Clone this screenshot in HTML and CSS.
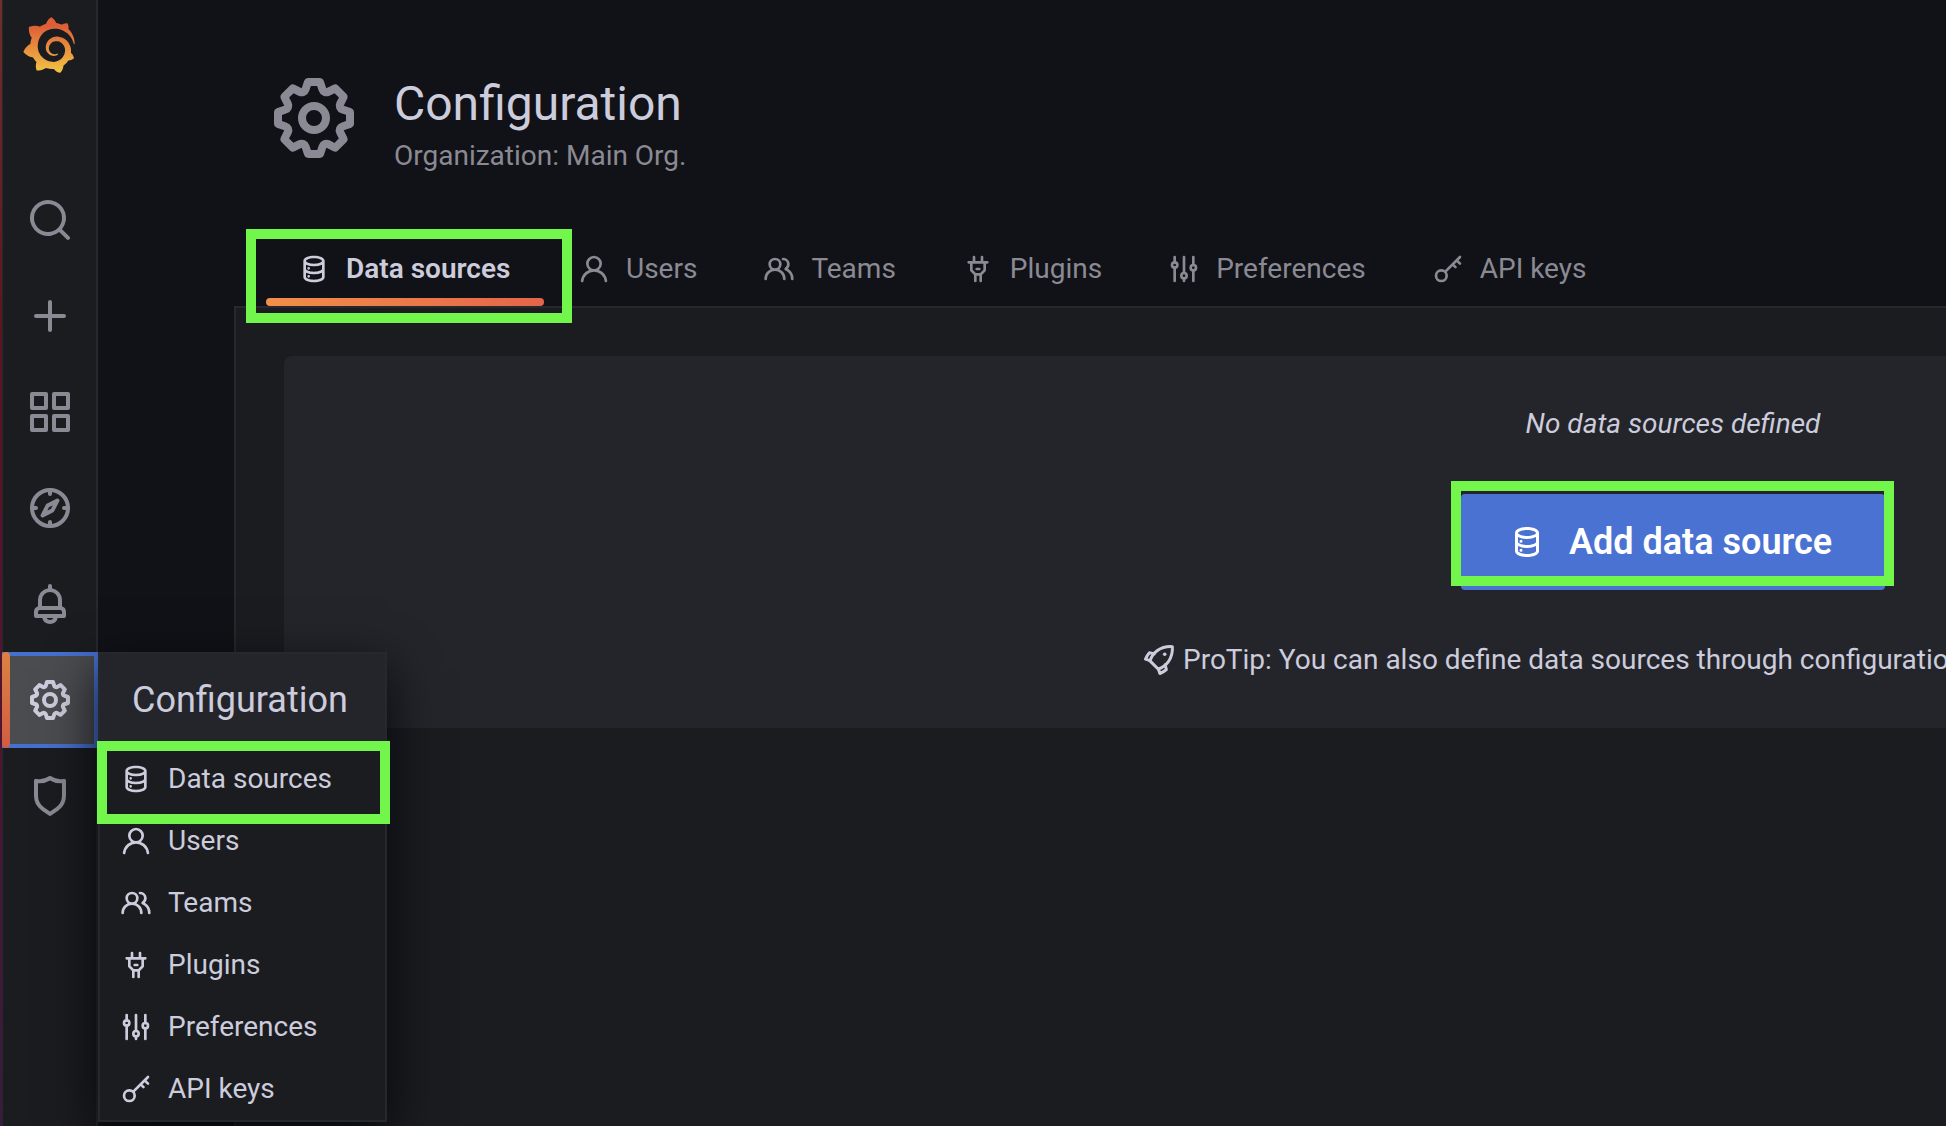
FILE: index.html
```html
<!DOCTYPE html>
<html lang="en">
<head>
<meta charset="utf-8">
<meta name="viewport" content="width=device-width, initial-scale=1">
<title>Configuration: Data sources - Grafana</title>
<link rel="stylesheet" href="styles.css">
</head>
<body>
<svg class="sprite" aria-hidden="true">
  <symbol id="i-search" viewBox="0 0 24 24"><path d="M21.71,20.29,18,16.61A9,9,0,1,0,16.61,18l3.68,3.68a1,1,0,0,0,1.42,0A1,1,0,0,0,21.71,20.29ZM11,18a7,7,0,1,1,7-7A7,7,0,0,1,11,18Z"/></symbol>
  <symbol id="i-plus" viewBox="0 0 24 24"><path d="M19,11H13V5a1,1,0,0,0-2,0v6H5a1,1,0,0,0,0,2h6v6a1,1,0,0,0,2,0V13h6a1,1,0,0,0,0-2Z"/></symbol>
  <symbol id="i-apps" viewBox="0 0 24 24"><path d="M10,13H3a1,1,0,0,0-1,1v7a1,1,0,0,0,1,1h7a1,1,0,0,0,1-1V14A1,1,0,0,0,10,13ZM9,20H4V15H9ZM21,2H14a1,1,0,0,0-1,1v7a1,1,0,0,0,1,1h7a1,1,0,0,0,1-1V3A1,1,0,0,0,21,2ZM20,9H15V4h5Zm1,4H14a1,1,0,0,0-1,1v7a1,1,0,0,0,1,1h7a1,1,0,0,0,1-1V14A1,1,0,0,0,21,13Zm-1,7H15V15h5ZM10,2H3A1,1,0,0,0,2,3v7a1,1,0,0,0,1,1h7a1,1,0,0,0,1-1V3A1,1,0,0,0,10,2ZM9,9H4V4H9Z"/></symbol>
  <symbol id="i-compass" viewBox="0 0 24 24"><g fill="none" stroke="currentColor" stroke-width="2" stroke-linecap="round" stroke-linejoin="round"><circle cx="12" cy="12" r="9"/><path d="M12 3v2M12 19v2M3 12h2M19 12h2"/><path d="M15.7 8.3 10.8 10.8 8.3 15.7 13.2 13.2Z"/></g></symbol>
  <symbol id="i-bell" viewBox="0 0 24 24"><path d="M18,13.18V10a6,6,0,0,0-5-5.91V3a1,1,0,0,0-2,0V4.09A6,6,0,0,0,6,10v3.18A3,3,0,0,0,4,16v2a1,1,0,0,0,1,1H8.14a4,4,0,0,0,7.72,0H19a1,1,0,0,0,1-1V16A3,3,0,0,0,18,13.18ZM8,10a4,4,0,0,1,8,0v3H8Zm4,10a2,2,0,0,1-1.72-1h3.44A2,2,0,0,1,12,20Zm6-3H6V16a1,1,0,0,1,1-1H17a1,1,0,0,1,1,1Z"/></symbol>
  <symbol id="i-cog" viewBox="0 0 24 24"><path d="M21.32,9.55l-1.89-.63.89-1.78A1,1,0,0,0,20.13,6L18,3.87a1,1,0,0,0-1.15-.19l-1.78.89-.63-1.89A1,1,0,0,0,13.5,2h-3a1,1,0,0,0-.95.68L8.92,4.57,7.14,3.68A1,1,0,0,0,6,3.87L3.87,6a1,1,0,0,0-.19,1.15l.89,1.78-1.89.63A1,1,0,0,0,2,10.5v3a1,1,0,0,0,.68.95l1.89.63-.89,1.78A1,1,0,0,0,3.87,18L6,20.13a1,1,0,0,0,1.15.19l1.78-.89.63,1.89a1,1,0,0,0,.95.68h3a1,1,0,0,0,.95-.68l.63-1.89,1.78.89A1,1,0,0,0,18,20.13L20.13,18a1,1,0,0,0,.19-1.15l-.89-1.78,1.89-.63A1,1,0,0,0,22,13.5v-3A1,1,0,0,0,21.32,9.55ZM20,12.78l-1.2.4A2,2,0,0,0,17.64,16l.57,1.14-1.1,1.1L16,17.64a2,2,0,0,0-2.79,1.16l-.4,1.2H11.22l-.4-1.2A2,2,0,0,0,8,17.64l-1.14.57-1.1-1.1L6.36,16A2,2,0,0,0,5.2,13.18L4,12.78V11.22l1.2-.4A2,2,0,0,0,6.36,8L5.79,6.89l1.1-1.1L8,6.36A2,2,0,0,0,10.82,5.2l.4-1.2h1.56l.4,1.2A2,2,0,0,0,16,6.36l1.14-.57,1.1,1.1L17.64,8a2,2,0,0,0,1.16,2.79l1.2.4ZM12,8a4,4,0,1,0,4,4A4,4,0,0,0,12,8Zm0,6a2,2,0,1,1,2-2A2,2,0,0,1,12,14Z"/></symbol>
  <symbol id="i-shield" viewBox="0 0 24 24"><path d="M19.63,3.65a1,1,0,0,0-.84-.2,8,8,0,0,1-6.22-1.27,1,1,0,0,0-1.14,0A8,8,0,0,1,5.21,3.45a1,1,0,0,0-.84.2A1,1,0,0,0,4,4.43v7.45a9,9,0,0,0,3.77,7.33l3.65,2.6a1,1,0,0,0,1.16,0l3.65-2.6A9,9,0,0,0,20,11.88V4.43A1,1,0,0,0,19.63,3.65ZM18,11.88a7,7,0,0,1-2.93,5.7L12,19.77,8.93,17.58A7,7,0,0,1,6,11.88V5.58a10,10,0,0,0,6-1.39,10,10,0,0,0,6,1.39Z"/></symbol>
  <symbol id="i-database" viewBox="0 0 24 24"><path d="M8,16.5a1,1,0,1,0,1,1A1,1,0,0,0,8,16.5ZM12,2C8,2,4,3.37,4,6V18c0,2.63,4,4,8,4s8-1.37,8-4V6C20,3.37,16,2,12,2Zm6,16c0,.71-2.28,2-6,2s-6-1.29-6-2V14.73A13.16,13.16,0,0,0,12,16a13.16,13.16,0,0,0,6-1.27Zm0-6c0,.71-2.28,2-6,2s-6-1.29-6-2V8.73A13.16,13.16,0,0,0,12,10a13.16,13.16,0,0,0,6-1.27ZM12,8C8.28,8,6,6.71,6,6s2.28-2,6-2,6,1.29,6,2S15.72,8,12,8ZM8,10.5a1,1,0,1,0,1,1A1,1,0,0,0,8,10.5Z"/></symbol>
  <symbol id="i-user" viewBox="0 0 24 24"><path d="M15.71,12.71a6,6,0,1,0-7.42,0,10,10,0,0,0-6.22,8.18,1,1,0,0,0,2,.22,8,8,0,0,1,15.9,0,1,1,0,0,0,1,.89h.11a1,1,0,0,0,.88-1.1A10,10,0,0,0,15.71,12.71ZM12,12a4,4,0,1,1,4-4A4,4,0,0,1,12,12Z"/></symbol>
  <symbol id="i-users" viewBox="0 0 24 24"><path d="M12.3,12.22A4.92,4.92,0,0,0,14,8.5a5,5,0,0,0-10,0,4.92,4.92,0,0,0,1.7,3.72A8,8,0,0,0,1,19.5a1,1,0,0,0,2,0,6,6,0,0,1,12,0,1,1,0,0,0,2,0A8,8,0,0,0,12.3,12.22ZM9,11.5a3,3,0,1,1,3-3A3,3,0,0,1,9,11.5Zm9.74.32A5,5,0,0,0,15,3.5a1,1,0,0,0,0,2,3,3,0,0,1,3,3,3,3,0,0,1-1.5,2.59,1,1,0,0,0-.5.84,1,1,0,0,0,.45.86l.39.26.13.07a7,7,0,0,1,4,6.38,1,1,0,0,0,2,0A9,9,0,0,0,18.74,11.82Z"/></symbol>
  <symbol id="i-plug" viewBox="0 0 24 24"><path d="M19,6H16V3a1,1,0,0,0-2,0V6H10V3A1,1,0,0,0,8,3V6H5A1,1,0,0,0,5,8H6v5a1,1,0,0,0,.29.71L9,16.41V21a1,1,0,0,0,2,0V17h2v4a1,1,0,0,0,2,0V16.41l2.71-2.7A1,1,0,0,0,18,13V8h1a1,1,0,0,0,0-2Zm-3,6.59L13.59,15H10.41L8,12.59V8h8ZM11,13h2a1,1,0,0,0,0-2H11a1,1,0,0,0,0,2Z"/></symbol>
  <symbol id="i-sliders" viewBox="0 0 24 24"><g fill="none" stroke="currentColor" stroke-width="2" stroke-linecap="round"><path d="M5 3v4M5 11v10M12 3v12M12 19v2M19 3v6M19 13v8"/><circle cx="5" cy="9" r="2"/><circle cx="12" cy="17" r="2"/><circle cx="19" cy="11" r="2"/></g></symbol>
  <symbol id="i-key" viewBox="0 0 24 24"><g fill="none" stroke="currentColor" stroke-width="2" stroke-linecap="round"><circle cx="7" cy="17" r="4"/><path d="M10 14 21 3M18.5 5.5 21 8M15.5 8.5 17.6 10.6"/></g></symbol>
  <symbol id="i-rocket" viewBox="0 0 24 24"><g fill="none" stroke="currentColor" stroke-width="2" stroke-linecap="round" stroke-linejoin="round"><path d="M6 12.6C7.6 7.4 12.6 2.6 20.9 3.1 21.4 11.4 16.6 16.4 11.4 18Z"/><path d="M8.8 7.9 5.6 7.1Q4.2 8.6 3 11.4L6 12.4M16.1 15.2 16.9 18.4Q15.4 19.8 12.6 21L11.6 18"/></g><circle cx="15.8" cy="8.2" r="1.2"/></symbol>
</svg>

<div class="app">
  <nav class="sidebar" aria-label="Main">
    <a class="logo" href="#" aria-label="Home">
      <svg viewBox="0 0 351 365" aria-hidden="true">
        <defs><linearGradient id="flame" gradientUnits="userSpaceOnUse" x1="175" y1="60" x2="175" y2="360"><stop offset="0" stop-color="#dd5f38"/><stop offset="1" stop-color="#f2c344"/></linearGradient></defs>
        <path fill="url(#flame)" d="M342,161.2c-0.6-6.1-1.6-13.1-3.6-20.9c-2-7.7-5-16.2-9.4-25c-4.4-8.8-10.1-17.9-17.5-26.8c-2.9-3.5-6.1-6.9-9.5-10.2c5.1-20.3-6.2-37.9-6.2-37.9c-19.5-1.2-31.9,6.1-36.5,9.4c-0.8-0.3-1.5-0.7-2.3-1c-3.3-1.3-6.7-2.6-10.3-3.7c-3.5-1.1-7.1-2.1-10.8-3c-3.7-0.9-7.4-1.6-11.2-2.2c-0.7-0.1-1.3-0.2-2-0.3c-8.5-27.2-32.9-38.6-32.9-38.6c-27.3,17.3-32.4,41.5-32.4,41.5s-0.1,0.5-0.3,1.4c-1.5,0.4-3,0.9-4.5,1.3c-2.1,0.6-4.2,1.4-6.2,2.2c-2.1,0.8-4.1,1.6-6.2,2.5c-4.1,1.8-8.2,3.8-12.2,6c-3.9,2.2-7.7,4.6-11.4,7.1c-0.5-0.2-1-0.4-1-0.4c-37.8-14.4-71.3,2.9-71.3,2.9c-3.1,40.2,15.1,65.5,18.7,70.1c-0.9,2.5-1.7,5-2.5,7.5c-2.8,9.1-4.9,18.4-6.2,28.1c-0.2,1.4-0.4,2.8-0.5,4.2C18.8,192.7,8.5,228,8.5,228c29.1,33.5,63.1,35.6,63.1,35.6c0,0,0.1-0.1,0.1-0.1c4.3,7.7,9.3,15,14.9,21.9c2.4,2.9,4.8,5.6,7.4,8.3c-10.6,30.4,1.5,55.6,1.5,55.6c32.4,1.2,53.7-14.2,58.2-17.7c3.2,1.1,6.5,2.1,9.8,2.9c10,2.6,20.2,4.1,30.4,4.5c2.5,0.1,5.1,0.2,7.6,0.1l1.2,0l0.8,0l1.6,0l1.6-0.1l0,0.1c15.3,21.8,42.1,24.9,42.1,24.9c19.1-20.1,20.2-40.1,20.2-44.4l0,0c0,0,0-0.1,0-0.3c0-0.4,0-0.6,0-0.6l0,0c0-0.3,0-0.6,0-0.9c4-2.8,7.8-5.8,11.4-9.1c7.6-6.9,14.3-14.8,19.9-23.3c0.5-0.8,1-1.6,1.5-2.4c21.6,1.2,36.9-13.4,36.9-13.4c-3.6-22.5-16.4-33.5-19.1-35.6l0,0c0,0-0.1-0.1-0.3-0.2c-0.2-0.1-0.2-0.2-0.2-0.2c0,0,0,0,0,0c-0.1-0.1-0.3-0.2-0.5-0.3c0.1-1.4,0.2-2.7,0.3-4.1c0.2-2.4,0.2-4.9,0.2-7.3l0-1.8l0-0.9l0-0.5c0-0.6,0-0.4,0-0.6l-0.1-1.5l-0.1-2c0-0.7-0.1-1.3-0.2-1.9c-0.1-0.6-0.1-1.3-0.2-1.9l-0.2-1.9l-0.3-1.9c-0.4-2.5-0.8-4.9-1.4-7.4c-2.3-9.7-6.1-18.9-11-27.2c-5-8.3-11.2-15.6-18.3-21.8c-7-6.2-14.9-11.2-23.1-14.9c-8.3-3.7-16.9-6.1-25.5-7.2c-4.3-0.6-8.6-0.8-12.9-0.7l-1.6,0l-0.4,0c-0.1,0-0.6,0-0.5,0l-0.7,0l-1.6,0.1c-0.6,0-1.2,0.1-1.7,0.1c-2.2,0.2-4.4,0.5-6.5,0.9c-8.6,1.6-16.7,4.7-23.8,9c-7.1,4.3-13.3,9.6-18.3,15.6c-5,6-8.9,12.7-11.6,19.6c-2.7,6.9-4.2,14.1-4.6,21c-0.1,1.7-0.1,3.5-0.1,5.2c0,0.4,0,0.9,0,1.3l0.1,1.4c0.1,0.8,0.1,1.7,0.2,2.5c0.3,3.5,1,6.9,1.9,10.1c1.9,6.5,4.9,12.4,8.6,17.4c3.7,5,8.2,9.1,12.9,12.4c4.7,3.2,9.8,5.5,14.8,7c5,1.5,10,2.1,14.7,2.1c0.6,0,1.2,0,1.7,0c0.3,0,0.6,0,0.9,0c0.3,0,0.6,0,0.9-0.1c0.5,0,1-0.1,1.5-0.1c0.1,0,0.3,0,0.4-0.1l0.5-0.1c0.3,0,0.6-0.1,0.9-0.1c0.6-0.1,1.1-0.2,1.7-0.3c0.6-0.1,1.1-0.2,1.6-0.4c1.1-0.2,2.1-0.6,3.1-0.9c2-0.7,4-1.5,5.7-2.4c1.8-0.9,3.4-2,5-3c0.4-0.3,0.9-0.6,1.3-1c1.6-1.3,1.9-3.7,0.6-5.3c-1.1-1.4-3.1-1.8-4.7-0.9c-0.4,0.2-0.8,0.4-1.2,0.6c-1.4,0.7-2.8,1.3-4.3,1.8c-1.5,0.5-3.1,0.9-4.7,1.2c-0.8,0.1-1.6,0.2-2.5,0.3c-0.4,0-0.8,0.1-1.3,0.1c-0.4,0-0.9,0-1.2,0c-0.4,0-0.8,0-1.2,0c-0.5,0-1,0-1.5-0.1c0,0-0.3,0-0.1,0l-0.2,0l-0.3,0c-0.2,0-0.5,0-0.7-0.1c-0.5-0.1-0.9-0.1-1.4-0.2c-3.7-0.5-7.4-1.6-10.9-3.2c-3.6-1.6-7-3.8-10.1-6.6c-3.1-2.8-5.8-6.1-7.9-9.9c-2.1-3.8-3.6-8-4.3-12.4c-0.3-2.2-0.5-4.5-0.4-6.7c0-0.6,0.1-1.2,0.1-1.8c0,0.2,0-0.1,0-0.1l0-0.2l0-0.5c0-0.3,0.1-0.6,0.1-0.9c0.1-1.2,0.3-2.4,0.5-3.6c1.7-9.6,6.5-19,13.9-26.1c1.9-1.8,3.9-3.4,6-4.9c2.1-1.5,4.4-2.8,6.8-3.9c2.4-1.1,4.8-2,7.4-2.7c2.5-0.7,5.1-1.1,7.8-1.4c1.3-0.1,2.6-0.2,4-0.2c0.4,0,0.6,0,0.9,0l1.1,0l0.7,0c0.3,0,0,0,0.1,0l0.3,0l1.1,0.1c2.9,0.2,5.7,0.6,8.5,1.3c5.6,1.2,11.1,3.3,16.2,6.1c10.2,5.7,18.9,14.5,24.2,25.1c2.7,5.3,4.6,11,5.5,16.9c0.2,1.5,0.4,3,0.5,4.5l0.1,1.1l0.1,1.1c0,0.4,0,0.8,0,1.1c0,0.4,0,0.8,0,1.1l0,1l0,1.1c0,0.7-0.1,1.9-0.1,2.6c-0.1,1.6-0.3,3.3-0.5,4.9c-0.2,1.6-0.5,3.2-0.8,4.8c-0.3,1.6-0.7,3.2-1.1,4.7c-0.8,3.1-1.8,6.2-3,9.3c-2.4,6-5.6,11.8-9.4,17.1c-7.7,10.6-18.2,19.2-30.2,24.7c-6,2.7-12.3,4.7-18.8,5.7c-3.2,0.6-6.5,0.9-9.8,1l-0.6,0l-0.5,0l-1.1,0l-1.6,0l-0.8,0c0.4,0-0.1,0-0.1,0l-0.3,0c-1.8,0-3.5-0.1-5.3-0.3c-7-0.5-13.9-1.8-20.7-3.7c-6.7-1.9-13.2-4.6-19.4-7.8c-12.3-6.6-23.4-15.6-32-26.5c-4.3-5.4-8.1-11.3-11.2-17.4c-3.1-6.1-5.6-12.6-7.4-19.1c-1.8-6.6-2.9-13.3-3.4-20.1l-0.1-1.3l0-0.3l0-0.3l0-0.6l0-1.1l0-0.3l0-0.4l0-0.8l0-1.6l0-0.3c0,0,0,0.1,0-0.1l0-0.6c0-0.8,0-1.7,0-2.5c0.1-3.3,0.4-6.8,0.8-10.2c0.4-3.4,1-6.9,1.7-10.3c0.7-3.4,1.5-6.8,2.5-10.2c1.9-6.7,4.3-13.2,7.1-19.3c5.7-12.2,13.1-23.1,22-31.8c2.2-2.2,4.5-4.2,6.9-6.2c2.4-1.9,4.9-3.7,7.5-5.4c2.5-1.7,5.2-3.2,7.9-4.6c1.3-0.7,2.7-1.4,4.1-2c0.7-0.3,1.4-0.6,2.1-0.9c0.7-0.3,1.4-0.6,2.1-0.9c2.8-1.2,5.7-2.2,8.7-3.1c0.7-0.2,1.5-0.4,2.2-0.7c0.7-0.2,1.5-0.4,2.2-0.6c1.5-0.4,3-0.8,4.5-1.1c0.7-0.2,1.5-0.3,2.3-0.5c0.8-0.2,1.5-0.3,2.3-0.5c0.8-0.1,1.5-0.3,2.3-0.4l1.1-0.2l1.2-0.2c0.8-0.1,1.5-0.2,2.3-0.3c0.9-0.1,1.7-0.2,2.6-0.3c0.7-0.1,1.9-0.2,2.6-0.3c0.5-0.1,1.1-0.1,1.6-0.2l1.1-0.1l0.5-0.1l0.6,0c0.9-0.1,1.7-0.1,2.6-0.2l1.3-0.1c0,0,0.5,0,0.1,0l0.3,0l0.6,0c0.7,0,1.5-0.1,2.2-0.1c2.9-0.1,5.9-0.1,8.8,0c5.8,0.2,11.5,0.9,17,1.9c11.1,2.1,21.5,5.6,31,10.3c9.5,4.6,17.9,10.3,25.3,16.5c0.5,0.4,0.9,0.8,1.4,1.2c0.4,0.4,0.9,0.8,1.3,1.2c0.9,0.8,1.7,1.6,2.6,2.4c0.9,0.8,1.7,1.6,2.5,2.4c0.8,0.8,1.6,1.6,2.4,2.5c3.1,3.3,6,6.6,8.6,10c5.2,6.7,9.4,13.5,12.7,19.9c0.2,0.4,0.4,0.8,0.6,1.2c0.2,0.4,0.4,0.8,0.6,1.2c0.4,0.8,0.8,1.6,1.1,2.4c0.4,0.8,0.7,1.5,1.1,2.3c0.3,0.8,0.7,1.5,1,2.3c1.2,3,2.4,5.9,3.3,8.6c1.5,4.4,2.6,8.3,3.5,11.7c0.3,1.4,1.6,2.3,3,2.1c1.5-0.1,2.6-1.3,2.6-2.8C342.6,170.4,342.5,166.1,342,161.2z"/>
      </svg>
    </a>
    <ul class="side-list">
      <li><a class="side-link" href="#" aria-label="Search"><svg><use href="#i-search"/></svg></a></li>
      <li><a class="side-link" href="#" aria-label="Create"><svg><use href="#i-plus"/></svg></a></li>
      <li><a class="side-link" href="#" aria-label="Dashboards"><svg><use href="#i-apps"/></svg></a></li>
      <li><a class="side-link" href="#" aria-label="Explore"><svg><use href="#i-compass"/></svg></a></li>
      <li><a class="side-link" href="#" aria-label="Alerting"><svg><use href="#i-bell"/></svg></a></li>
      <li class="has-menu">
        <a class="side-link active" href="#" aria-label="Configuration"><svg><use href="#i-cog"/></svg></a>
        <div class="menu">
          <a class="menu-title" href="#">Configuration</a>
          <ul class="menu-list">
            <li><a class="menu-link marked" href="#"><svg><use href="#i-database"/></svg>Data sources</a></li>
            <li><a class="menu-link" href="#"><svg><use href="#i-user"/></svg>Users</a></li>
            <li><a class="menu-link" href="#"><svg><use href="#i-users"/></svg>Teams</a></li>
            <li><a class="menu-link" href="#"><svg><use href="#i-plug"/></svg>Plugins</a></li>
            <li><a class="menu-link" href="#"><svg><use href="#i-sliders"/></svg>Preferences</a></li>
            <li><a class="menu-link" href="#"><svg><use href="#i-key"/></svg>API keys</a></li>
          </ul>
        </div>
      </li>
      <li><a class="side-link" href="#" aria-label="Server admin"><svg><use href="#i-shield"/></svg></a></li>
    </ul>
  </nav>

  <main class="page">
    <header class="page-header">
      <svg class="page-icon" aria-hidden="true"><use href="#i-cog"/></svg>
      <div>
        <h1>Configuration</h1>
        <p class="subtitle">Organization: Main Org.</p>
      </div>
    </header>
    <nav class="tabs" aria-label="Configuration sections">
      <a class="tab current marked" href="#" aria-current="page"><svg><use href="#i-database"/></svg>Data sources</a>
      <a class="tab" href="#"><svg><use href="#i-user"/></svg>Users</a>
      <a class="tab" href="#"><svg><use href="#i-users"/></svg>Teams</a>
      <a class="tab" href="#"><svg><use href="#i-plug"/></svg>Plugins</a>
      <a class="tab" href="#"><svg><use href="#i-sliders"/></svg>Preferences</a>
      <a class="tab" href="#"><svg><use href="#i-key"/></svg>API keys</a>
    </nav>
    <section class="panel">
      <div class="empty-card">
        <p class="empty-text">No data sources defined</p>
        <button class="add-button marked" type="button"><svg><use href="#i-database"/></svg>Add data source</button>
        <p class="protip"><svg><use href="#i-rocket"/></svg>ProTip: You can also define data sources through configuration files. Learn more</p>
      </div>
    </section>
  </main>
</div>
</body>
</html>
```
FILE: styles.css
```css
:root {
  --canvas: #111217;
  --surface: #1b1c20;
  --raised: #24252b;
  --line: #27282d;
  --text: #ccccdc;
  --muted: #8b8a94;
  --mark: #73f64b;
}

* { box-sizing: border-box; }

html, body { height: 100%; }

body {
  margin: 0;
  overflow: hidden;
  background: var(--canvas);
  color: var(--text);
  font-family: Roboto, "Liberation Sans", sans-serif;
  font-size: 28px;
  line-height: 40px;
}

a { color: inherit; text-decoration: none; }
ul { margin: 0; padding: 0; list-style: none; }
h1, p { margin: 0; }
svg { display: block; flex: none; fill: currentColor; }
.sprite { position: absolute; width: 0; height: 0; }

.app {
  display: flex;
  min-height: 100%;
  overflow: hidden;
}

/* Navigation rail */
.sidebar {
  position: relative;
  z-index: 1;
  flex: none;
  width: 98px;
  padding-left: 2px;
  background:
    linear-gradient(var(--line), var(--line)) 2px 0 / 1px 100% no-repeat,
    linear-gradient(#6e3029, #5c1420 30%, #56132a 50%, #3a1a3c) 0 0 / 2px 100% no-repeat,
    linear-gradient(var(--line), var(--line)) 100% 0 / 2px 100% no-repeat,
    var(--surface);
}

.logo {
  display: flex;
  justify-content: center;
  align-items: center;
  height: 90px;
  margin-bottom: 82px;
  padding-right: 2px;
}
.logo svg { width: 54px; height: 56px; }

.side-link {
  display: flex;
  justify-content: center;
  align-items: center;
  height: 96px;
  color: var(--muted);
}
.side-link svg { width: 48px; height: 48px; }

.side-link.active {
  position: relative;
  color: var(--text);
  background: #4b4c50;
  border: 4px solid #4670cf;
}
.side-link.active::before {
  content: "";
  position: absolute;
  inset: -4px auto -4px -4px;
  width: 8px;
  border-radius: 4px;
  background: linear-gradient(#da8242, #d25c43);
}

/* Fly-out menu */
.has-menu { position: relative; }

.menu {
  position: absolute;
  top: 0;
  left: 100%;
  width: 289px;
  padding-bottom: 1px;
  background: var(--surface);
  border: 2px solid var(--line);
  box-shadow: 0 16px 48px rgb(1 4 9 / 85%);
}
.menu-title {
  display: block;
  padding: 22px 32px 23px;
  background: var(--raised);
  font-size: 36px;
  line-height: 48px;
}
.menu-link {
  display: flex;
  align-items: center;
  gap: 16px;
  height: 62px;
  padding: 2px 20px 0;
}
.menu-link svg, .tab svg { width: 32px; height: 32px; }

/* Page: keeps its desktop width and runs past a narrow window */
.page {
  flex: 1 0 auto;
  display: flex;
  flex-direction: column;
  min-width: 3150px;
  padding: 0 136px;
}

.page-header {
  display: flex;
  gap: 32px;
  padding: 70px 32px 54px;
}
.page-icon { width: 96px; height: 96px; color: var(--muted); }
h1 {
  padding-top: 2px;
  font-size: 48px;
  line-height: 64px;
  font-weight: 400;
}
.subtitle { color: var(--muted); }

.tabs { display: flex; gap: 2px; padding: 0 32px; }
.tab {
  display: flex;
  align-items: center;
  gap: 16px;
  height: 76px;
  padding: 2px 32px 0;
  color: var(--muted);
}
.tab.current {
  position: relative;
  min-width: 278px;
  color: var(--text);
  font-weight: 600;
}
.tab.current::before {
  content: "";
  position: absolute;
  inset: auto 0 0;
  height: 8px;
  border-radius: 4px;
  background: linear-gradient(90deg, #f28f48, #e46549);
}

.panel {
  flex: 1;
  padding: 48px;
  background: var(--surface);
  border: 2px solid var(--line);
  border-bottom: 0;
}
.empty-card {
  display: flex;
  flex-direction: column;
  align-items: center;
  padding: 48px;
  background: var(--raised);
  border-radius: 8px;
}
.empty-text { font-style: italic; }
.add-button {
  display: flex;
  align-items: center;
  gap: 24px;
  min-width: 424px;
  height: 96px;
  margin: 50px 0;
  padding: 0 48px;
  border: 0;
  border-radius: 4px;
  background: #4a72d3;
  color: #fff;
  font: 600 36px/48px Roboto, "Liberation Sans", sans-serif;
}
.add-button svg, .protip svg { width: 36px; height: 36px; }
.protip {
  display: flex;
  align-items: center;
  gap: 6px;
  min-width: 1064px;
  white-space: nowrap;
}

/* Green call-out frames */
.marked { position: relative; }
.marked::after {
  content: "";
  position: absolute;
  z-index: 2;
  border: 10px solid var(--mark);
  pointer-events: none;
}
.tab.marked::after { inset: -1px -28px -17px -20px; }
.menu-link.marked::after { inset: -6px -5px -15px -3px; }
.add-button.marked::after { inset: -13px -9px 4px -10px; }
```
